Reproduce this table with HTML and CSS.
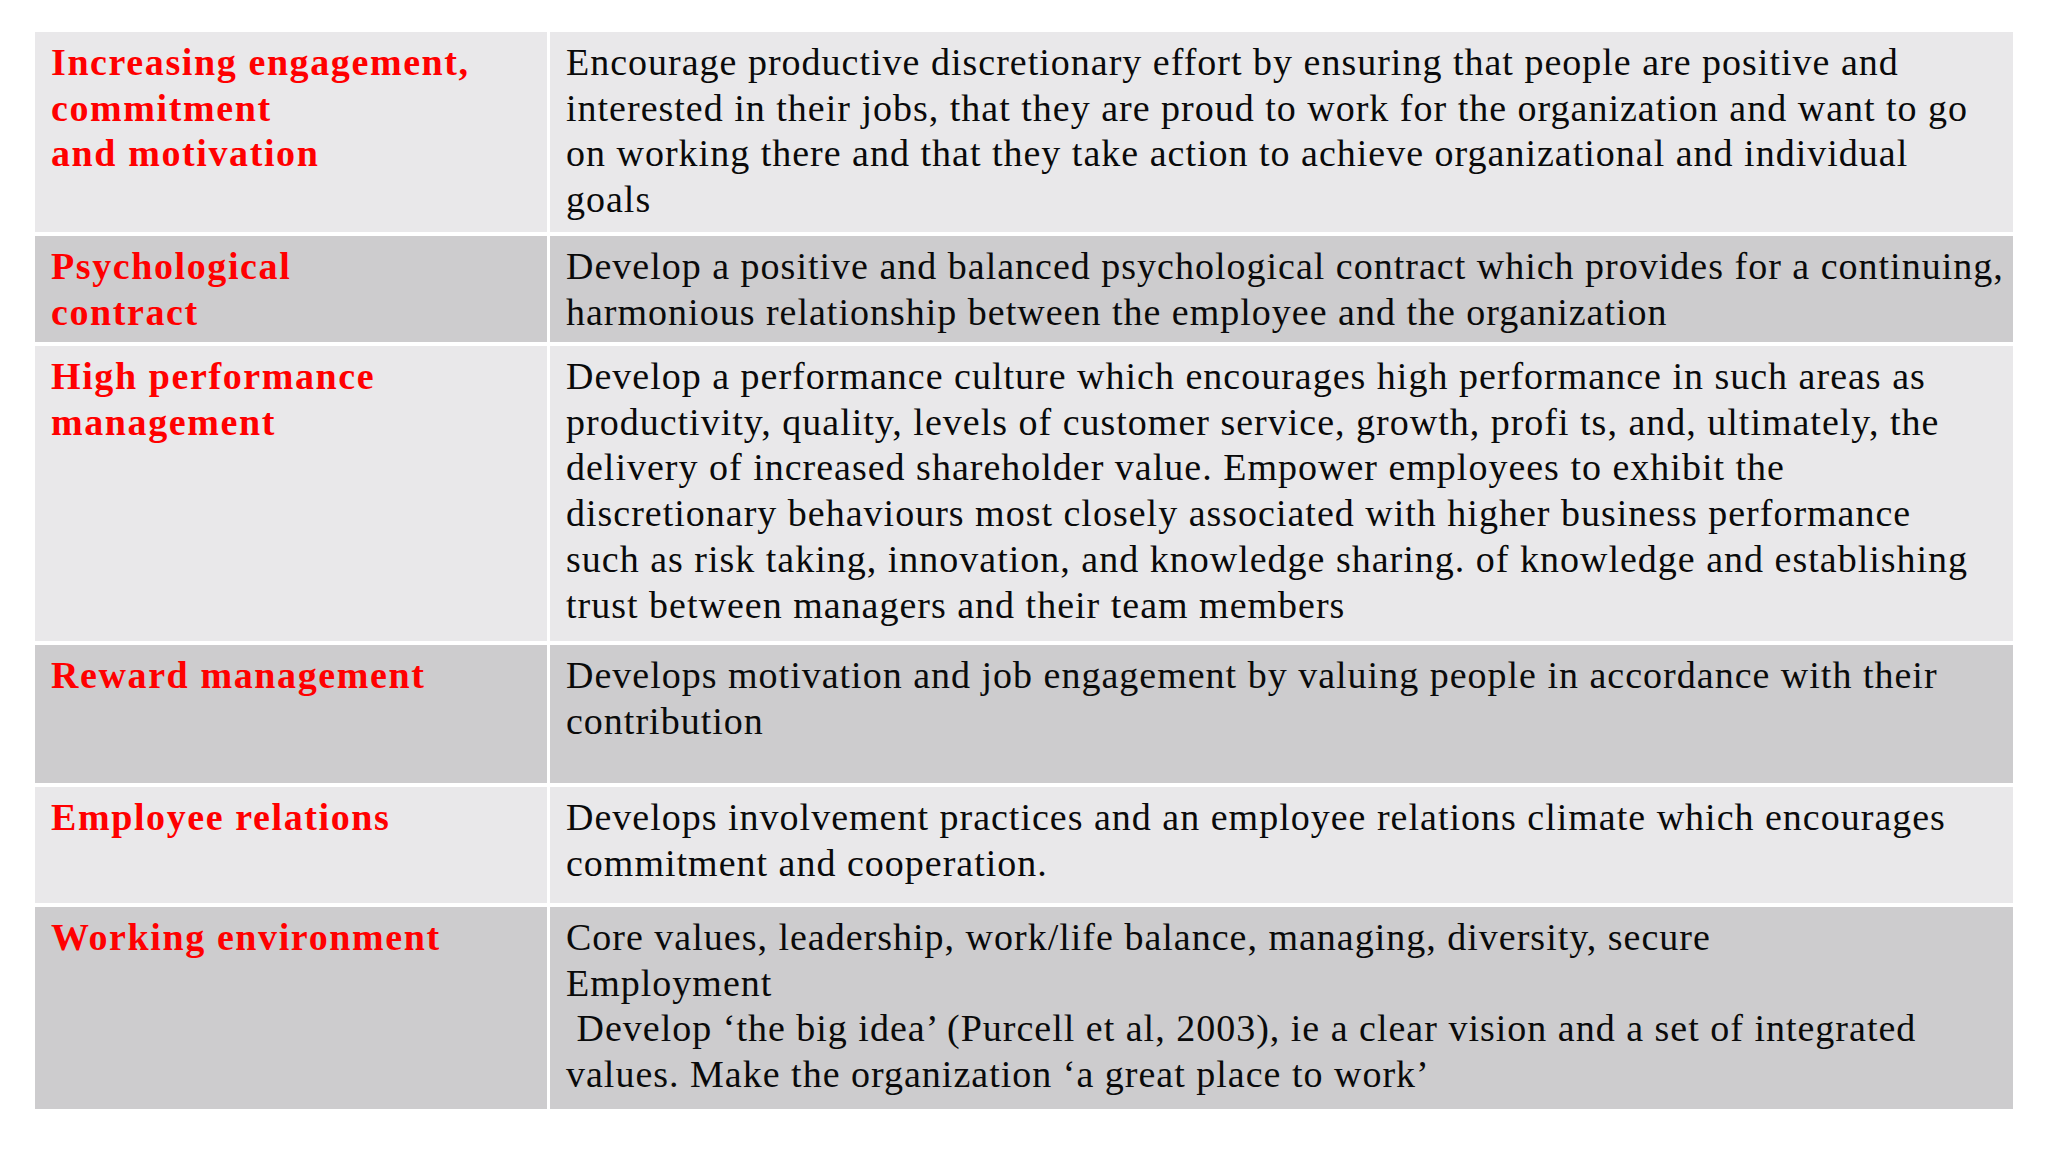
FILE: index.html
```html
<!DOCTYPE html>
<html lang="en">
<head>
<meta charset="utf-8">
<title>Engagement strategy table</title>
<link rel="stylesheet" href="styles.css">
</head>
<body>
<div class="table">
  <div class="cell head light">Increasing engagement,<br>commitment<br>and motivation</div>
  <div class="cell body light">Encourage productive discretionary effort by ensuring that people are positive and<br>interested in their jobs, that they are proud to work for the organization and want to go<br>on working there and that they take action to achieve organizational and individual<br>goals</div>

  <div class="cell head dark">Psychological<br>contract</div>
  <div class="cell body dark">Develop a positive and balanced psychological contract which provides for a continuing,<br>harmonious relationship between the employee and the organization</div>

  <div class="cell head light">High performance<br>management</div>
  <div class="cell body light">Develop a performance culture which encourages high performance in such areas as<br>productivity, quality, levels of customer service, growth, profi ts, and, ultimately, the<br>delivery of increased shareholder value. Empower employees to exhibit the<br>discretionary behaviours most closely associated with higher business performance<br>such as risk taking, innovation, and knowledge sharing. of knowledge and establishing<br>trust between managers and their team members</div>

  <div class="cell head dark">Reward management</div>
  <div class="cell body dark">Develops motivation and job engagement by valuing people in accordance with their<br>contribution</div>

  <div class="cell head light">Employee relations</div>
  <div class="cell body light">Develops involvement practices and an employee relations climate which encourages<br>commitment and cooperation.</div>

  <div class="cell head dark">Working environment</div>
  <div class="cell body dark">Core values, leadership, work/life balance, managing, diversity, secure<br>Employment<br>&nbsp;Develop ‘the big idea’ (Purcell et al, 2003), ie a clear vision and a set of integrated<br>values. Make the organization ‘a great place to work’</div>
</div>
</body>
</html>
```
FILE: styles.css
```css
html, body {
  margin: 0;
  padding: 0;
  background: #ffffff;
}

body {
  font-family: "Liberation Serif", "Times New Roman", serif;
  width: 2048px;
  height: 1152px;
  overflow: hidden;
}

.table {
  margin: 32px 0 0 35px;
  width: 1978px;
  display: grid;
  grid-template-columns: 512px 1463px;
  grid-template-rows: 200px 106px 295px 138px 116px 202px;
  column-gap: 3px;
  row-gap: 4px;
}

.cell {
  box-sizing: border-box;
  padding: 8px 0 0 16px;
  font-size: 38px;
  line-height: 45.7px;
  white-space: nowrap;
}

.light {
  background: #e9e8ea;
}

.dark {
  background: #cdccce;
}

.head {
  color: #ff0000;
  font-weight: bold;
  letter-spacing: 1.6px;
}

.body {
  color: #0a0a0a;
  letter-spacing: 1px;
}
```
